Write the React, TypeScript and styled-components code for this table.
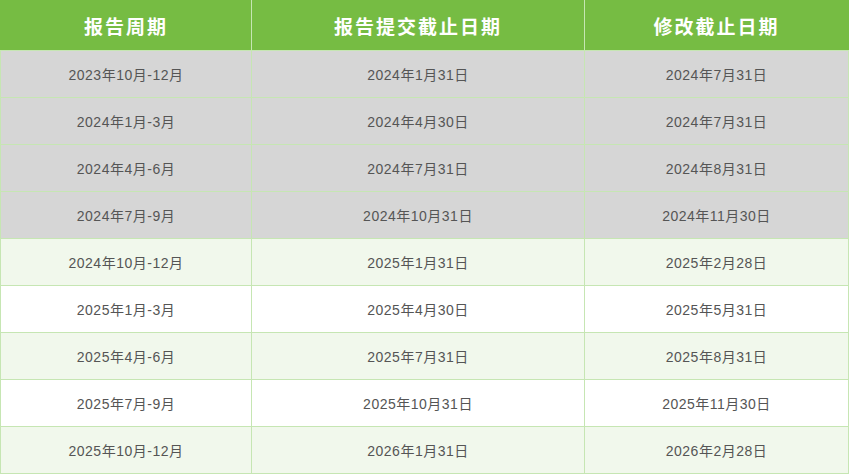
import React from "react";
import styled, { createGlobalStyle } from "styled-components";

const GlobalStyle = createGlobalStyle`
  html, body {
    margin: 0;
    padding: 0;
    background: #ffffff;
  }
`;

const Table = styled.table`
  width: 848px;
  border-collapse: collapse;
  border: 1px solid #76bc43;
  table-layout: fixed;
  font-family: "Liberation Sans", "Noto Sans CJK SC", sans-serif;
`;

const HeadCell = styled.th`
  height: 49px;
  padding: 0;
  background-color: #76bc43;
  color: #ffffff;
  font-family: "Noto Sans CJK SC", "Liberation Sans", sans-serif;
  font-size: 19px;
  font-weight: 700;
  letter-spacing: 2px;
  text-align: center;
  border-left: 1px solid #c6e6b3;
  &:first-child {
    border-left: none;
  }
`;

type RowKind = "past" | "tint" | "plain";

const rowBg: Record<RowKind, string> = {
  past: "#d6d6d6",
  tint: "#f1f8ec",
  plain: "#ffffff",
};

const Row = styled.tr<{ $kind: RowKind }>`
  background-color: ${(p) => rowBg[p.$kind]};
`;

const Cell = styled.td`
  height: 46px;
  padding: 0;
  text-align: center;
  color: #555555;
  font-size: 14px;
  letter-spacing: 0.5px;
  border: 1px solid #c6e6b3;
`;

type Period = {
  period: string;
  submit: string;
  modify: string;
  kind: RowKind;
};

const rows: Period[] = [
  { period: "2023年10月-12月", submit: "2024年1月31日", modify: "2024年7月31日", kind: "past" },
  { period: "2024年1月-3月", submit: "2024年4月30日", modify: "2024年7月31日", kind: "past" },
  { period: "2024年4月-6月", submit: "2024年7月31日", modify: "2024年8月31日", kind: "past" },
  { period: "2024年7月-9月", submit: "2024年10月31日", modify: "2024年11月30日", kind: "past" },
  { period: "2024年10月-12月", submit: "2025年1月31日", modify: "2025年2月28日", kind: "tint" },
  { period: "2025年1月-3月", submit: "2025年4月30日", modify: "2025年5月31日", kind: "plain" },
  { period: "2025年4月-6月", submit: "2025年7月31日", modify: "2025年8月31日", kind: "tint" },
  { period: "2025年7月-9月", submit: "2025年10月31日", modify: "2025年11月30日", kind: "plain" },
  { period: "2025年10月-12月", submit: "2026年1月31日", modify: "2026年2月28日", kind: "tint" },
];

const App = (): JSX.Element => {
  return (
    <>
      <GlobalStyle />
      <Table>
        <colgroup>
          <col style={{ width: 251 }} />
          <col style={{ width: 333 }} />
          <col style={{ width: 264 }} />
        </colgroup>
        <thead>
          <tr>
            <HeadCell>报告周期</HeadCell>
            <HeadCell>报告提交截止日期</HeadCell>
            <HeadCell>修改截止日期</HeadCell>
          </tr>
        </thead>
        <tbody>
          {rows.map((r) => (
            <Row key={r.period} $kind={r.kind}>
              <Cell>{r.period}</Cell>
              <Cell>{r.submit}</Cell>
              <Cell>{r.modify}</Cell>
            </Row>
          ))}
        </tbody>
      </Table>
    </>
  );
};

export default App;
